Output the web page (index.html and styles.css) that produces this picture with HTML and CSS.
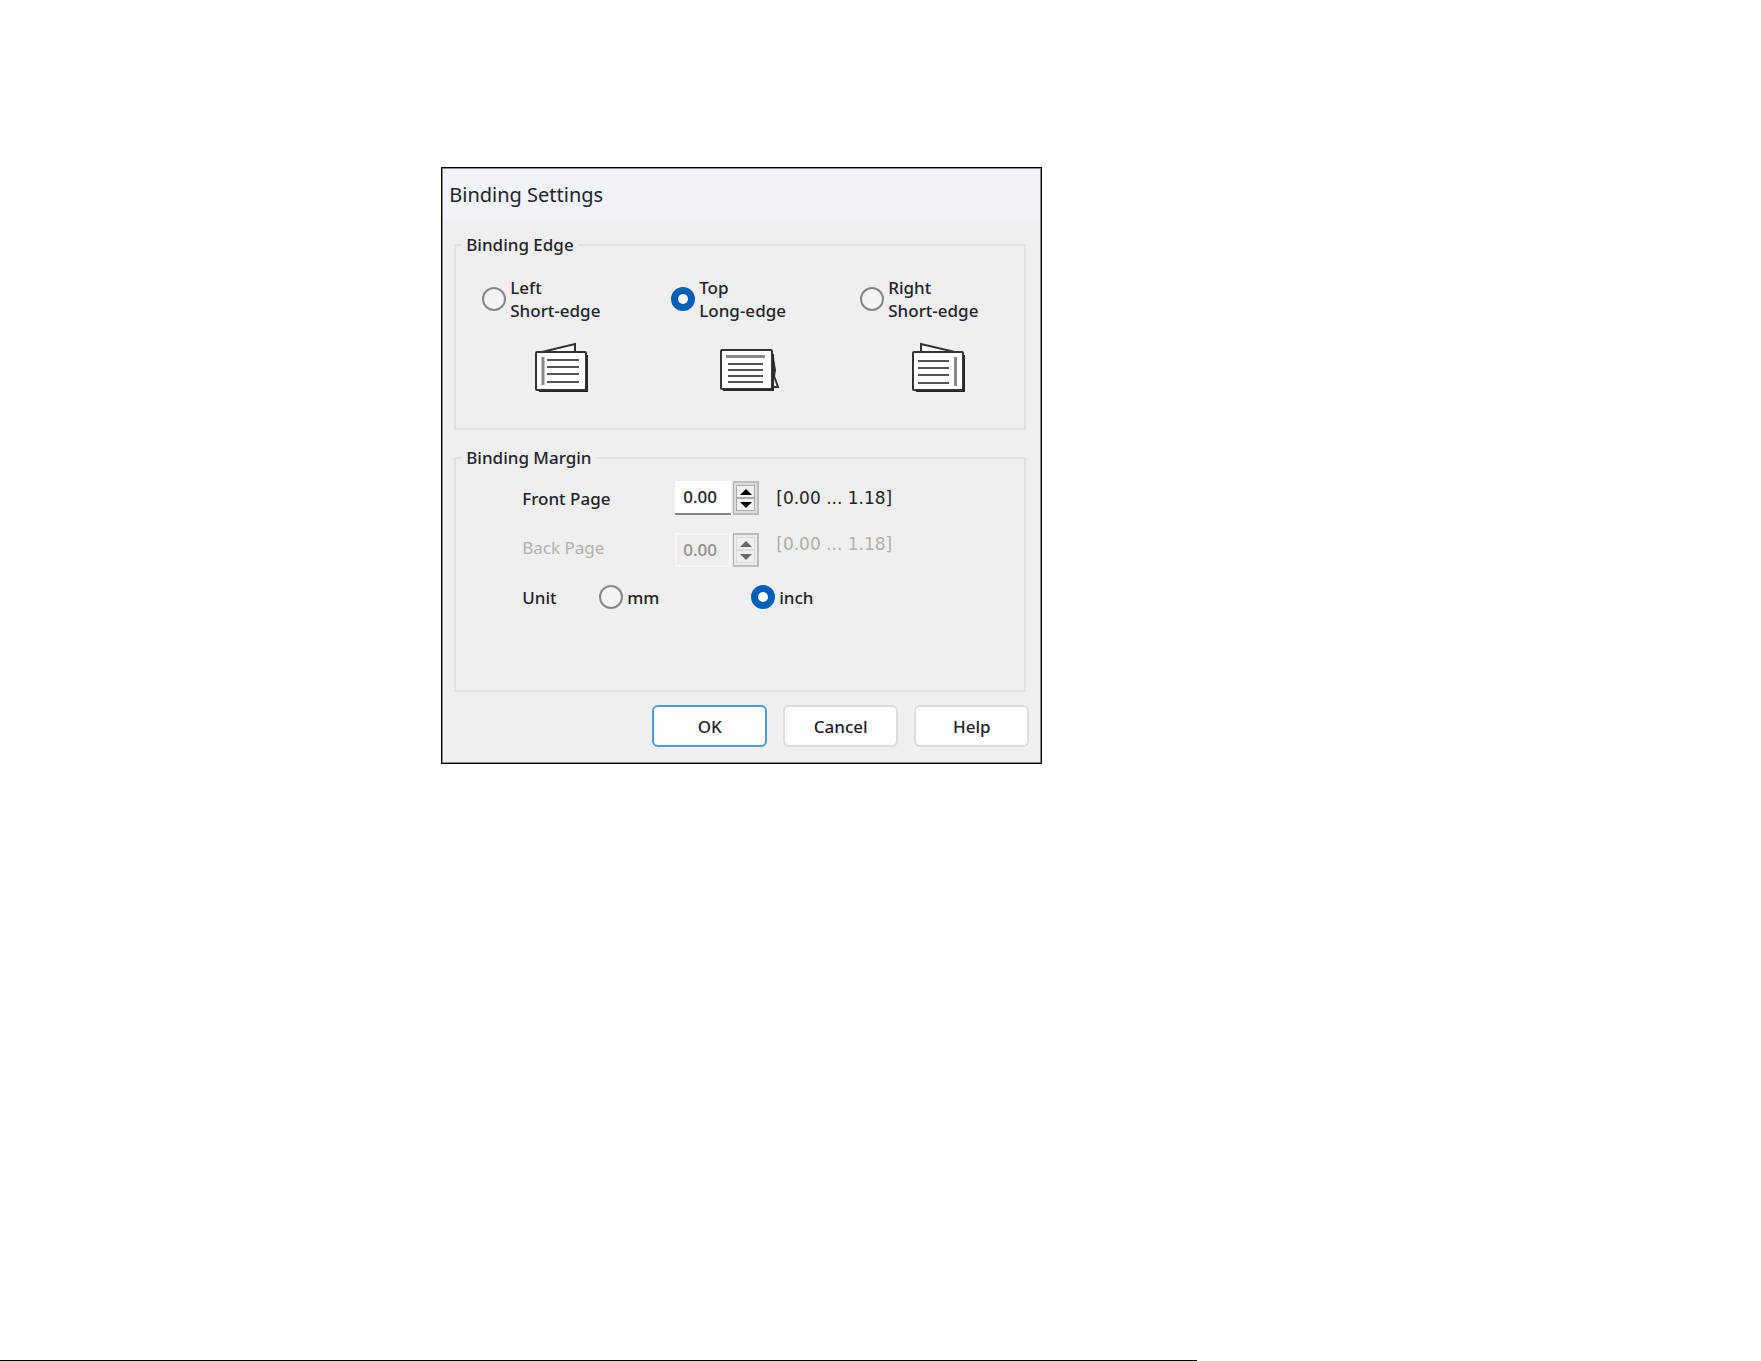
FILE: index.html
```html
<!DOCTYPE html>
<html lang="en">
<head>
<meta charset="utf-8">
<title>Binding Settings</title>
<link rel="stylesheet" href="styles.css">
</head>
<body>
<main class="page">
  <form class="dialog" aria-labelledby="dialog-title">
    <h1 class="dialog-title" id="dialog-title">Binding Settings</h1>
    <div class="dialog-body">
      <fieldset class="group">
        <legend>Binding Edge</legend>
        <div class="edges">
          <div class="edge">
            <label class="choice"><input type="radio" name="edge"><span>Left<br>Short-edge</span></label>
            <svg class="edge-icon" viewBox="0 0 64 56" aria-hidden="true">
              <path class="sheet" d="M14 12L47 4V13"/>
              <path class="shade" d="M11 51H59V15"/>
              <rect class="sheet" x="8" y="12" width="50" height="38" rx="1"/>
              <path class="fold" d="M15 17V45"/>
              <path class="lines" d="M19 20H51M19 27H51M19 34H51M19 42H51"/>
            </svg>
          </div>
          <div class="edge">
            <label class="choice"><input type="radio" name="edge" checked><span>Top<br>Long-edge</span></label>
            <svg class="edge-icon" viewBox="0 0 64 56" aria-hidden="true">
              <path class="sheet" d="M56 18L58 30L57 36L61 47H55"/>
              <path class="shade" d="M6 50H56V14"/>
              <rect class="sheet" x="4" y="10" width="51" height="39" rx="1"/>
              <path class="fold" d="M9 16.500H48"/>
              <path class="lines" d="M11 24H46M11 30H46M11 36H46M11 42H46"/>
            </svg>
          </div>
          <div class="edge">
            <label class="choice"><input type="radio" name="edge"><span>Right<br>Short-edge</span></label>
            <svg class="edge-icon" viewBox="0 0 64 56" aria-hidden="true">
              <path class="sheet" d="M15 13V4L49 12"/>
              <path class="shade" d="M10 51H58V15"/>
              <rect class="sheet" x="7" y="12" width="50" height="38" rx="1"/>
              <path class="fold" d="M49.500 17V46"/>
              <path class="lines" d="M12 21H43M12 28H43M12 35H43M12 43H43"/>
            </svg>
          </div>
        </div>
      </fieldset>

      <fieldset class="group group-margin">
        <legend>Binding Margin</legend>
        <div class="row">
          <label class="row-label" for="front">Front Page</label>
          <div class="spin">
            <input class="spin-value" id="front" type="text" value="0.00">
            <div class="spin-buttons">
              <button type="button" aria-label="Increase front margin"><svg viewBox="0 0 12 6"><path d="M0 6L6 0L12 6Z"/></svg></button>
              <button type="button" aria-label="Decrease front margin"><svg viewBox="0 0 12 6"><path d="M0 0L6 6L12 0Z"/></svg></button>
            </div>
          </div>
          <span class="range">[0.00 ... 1.18]</span>
        </div>
        <div class="row row-disabled">
          <label class="row-label" for="back">Back Page</label>
          <div class="spin">
            <input class="spin-value" id="back" type="text" value="0.00" disabled>
            <div class="spin-buttons">
              <button type="button" aria-label="Increase back margin" disabled><svg viewBox="0 0 12 6"><path d="M0 6L6 0L12 6Z"/></svg></button>
              <button type="button" aria-label="Decrease back margin" disabled><svg viewBox="0 0 12 6"><path d="M0 0L6 6L12 0Z"/></svg></button>
            </div>
          </div>
          <span class="range">[0.00 ... 1.18]</span>
        </div>
        <div class="row" role="radiogroup" aria-labelledby="unit-label">
          <span class="unit-label" id="unit-label">Unit</span>
          <label class="choice unit"><input type="radio" name="unit"><span>mm</span></label>
          <label class="choice unit"><input type="radio" name="unit" checked><span>inch</span></label>
        </div>
      </fieldset>
    </div>
    <div class="actions">
      <button class="action action-default" type="submit">OK</button>
      <button class="action" type="button">Cancel</button>
      <button class="action" type="button">Help</button>
    </div>
  </form>
  <hr class="page-rule">
</main>
</body>
</html>
```
FILE: styles.css
```css
* {
  box-sizing: border-box;
}

body {
  margin: 0;
  background: #fff;
  color: #23232b;
  font: 500 17px/23px "Noto Sans", "Open Sans", sans-serif;
}

.page {
  display: flex;
  flex-direction: column;
  min-height: 100vh;
  padding-top: 167px;
}

.dialog {
  width: 100%;
  max-width: 601px;
  margin-left: calc(25% + 1px);
  border: 1px solid #000;
  background: #efefef;
  box-shadow: inset 0 0 0 1px #8a8a8a;
}

.dialog-title {
  margin: 1px 1px 0;
  padding: 12px 6px;
  background: #f1f3f9;
  font-size: 20px;
  font-weight: 400;
  line-height: 28px;
}

.dialog-body {
  display: flex;
  flex-direction: column;
  gap: 16px;
  padding: 12px 15px 0 12px;
}

.group {
  min-width: 0;
  min-height: 197px;
  margin: 0;
  padding: 0;
  border: 2px solid #e1e1e1;
}

.group-margin {
  min-height: 246px;
  padding-top: 11px;
}

.group legend {
  margin-left: 6px;
  padding: 0 4px;
  line-height: 24px;
}

.edges {
  display: grid;
  grid-template-columns: 1fr 1fr 164px;
  padding: 19px 0 0 26px;
}

.edge {
  display: flex;
  flex-direction: column;
  gap: 18px;
}

.choice {
  display: flex;
  align-items: center;
  gap: 4px;
}

.choice input {
  flex: none;
  appearance: none;
  width: 24px;
  height: 24px;
  margin: 0;
  border: 2px solid #868686;
  border-radius: 50%;
  background: #f3f3f3;
}

.choice input:checked {
  border: 7px solid #005fb8;
  background: #fff;
}

.edge-icon {
  width: 64px;
  height: 56px;
  margin-left: 46px;
  fill: none;
  stroke: #222;
}

.sheet {
  fill: #fff;
  stroke: #333;
  stroke-width: 2;
}

.shade {
  stroke-width: 2;
}

.fold {
  stroke: #888;
  stroke-width: 3;
}

.lines {
  stroke: #555;
  stroke-width: 2;
}

.row {
  display: flex;
  align-items: center;
  margin: 0 0 18px 66px;
}

.row-label {
  width: 153px;
}

.spin {
  display: flex;
  gap: 2px;
  width: 84px;
  height: 34px;
  margin-right: 17px;
}

.spin-value {
  width: 56px;
  padding: 0 0 2px 8px;
  border: 0;
  border-bottom: 2px solid #858585;
  background: #fff;
  color: inherit;
  font: inherit;
}

.spin-buttons {
  display: flex;
  flex: 1;
  flex-direction: column;
  padding: 2px;
  border: 2px solid #bdbdbd;
  border-left: 1px solid #aaa;
  background: #ddd;
}

.spin-buttons button {
  display: flex;
  flex: 1;
  align-items: center;
  justify-content: center;
  min-height: 0;
  padding: 0;
  border: 1px solid #aaa;
  background: #f0f0f0;
}

.spin-buttons svg {
  width: 12px;
  height: 6px;
  fill: #000;
}

.range {
  font-family: "DejaVu Sans", sans-serif;
}

.row-disabled {
  color: #b0b0b0;
}

.row-disabled .row-label {
  padding-bottom: 5px;
  font-weight: 400;
}

.row-disabled .spin-value {
  border: 2px solid #f6f6f6;
  padding-left: 6px;
  background: #eee;
  color: #8f8f8f;
}

.row-disabled .spin-buttons {
  background: #ebebeb;
}

.row-disabled .spin-buttons button {
  border-color: #ddd;
}

.row-disabled svg {
  fill: #666;
}

.row-disabled .range {
  align-self: flex-start;
}

.unit-label {
  width: 77px;
}

.unit {
  width: 152px;
}

.actions {
  display: flex;
  justify-content: flex-end;
  gap: 16px;
  padding: 13px 12px 16px;
}

.action {
  width: 115px;
  height: 42px;
  padding: 0;
  border: 2px solid #dcdcdc;
  border-radius: 6px;
  background: #fdfdfd;
  color: inherit;
  font: inherit;
}

.action-default {
  border-color: #4a9ddc;
}

.page-rule {
  width: 68%;
  height: 1px;
  margin: auto 0 0;
  border: 0;
  background: #000;
}
```
